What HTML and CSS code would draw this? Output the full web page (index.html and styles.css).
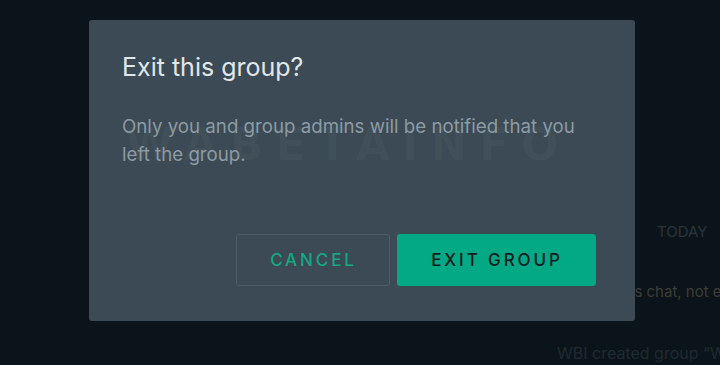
FILE: index.html
```html
<!DOCTYPE html>
<html lang="en">
<head>
<meta charset="utf-8">
<title>Exit this group?</title>
<link rel="stylesheet" href="styles.css">
</head>
<body>
  <main class="chat">
    <div class="day">TODAY</div>
    <div class="notice">this chat, not even WhatsApp, can read or listen to them.</div>
    <div class="system">WBI created group “WABetaInfo”</div>
  </main>
  <div class="dialog" role="dialog" aria-labelledby="dlg-title">
    <h1 class="dialog-title" id="dlg-title">Exit this group?</h1>
    <p class="dialog-text">Only you and group admins will be notified that you left the group.</p>
    <div class="dialog-actions">
      <button class="btn btn-outline" type="button">CANCEL</button>
      <button class="btn btn-primary" type="button">EXIT GROUP</button>
    </div>
    <div class="watermark" aria-hidden="true">WABETAINFO</div>
  </div>
</body>
</html>
```

FILE: styles.css
```css
html, body {
  margin: 0;
  padding: 0;
  height: 100%;
}

body {
  background: #0b141a;
  font-family: Inter, "Noto Sans", "Liberation Sans", sans-serif;
  overflow: hidden;
  position: relative;
}

.chat {
  display: flex;
  flex-direction: column;
  align-items: flex-start;
  padding-top: 222px;
  white-space: nowrap;
}

.day {
  margin-left: 657px;
  font-size: 15px;
  line-height: 20px;
  color: #29343b;
}

.notice {
  margin-left: 617px;
  margin-top: 40px;
  font-size: 15px;
  line-height: 20px;
  color: #3d3e35;
}

.system {
  margin-left: 557px;
  margin-top: 40px;
  font-size: 16px;
  line-height: 22px;
  color: #1e2a31;
}

.dialog {
  position: absolute;
  left: 89px;
  top: 20px;
  width: 546px;
  height: 301px;
  box-sizing: border-box;
  padding: 32px 39px 35px 33px;
  background: #3b4a54;
  border-radius: 3px;
  display: flex;
  flex-direction: column;
  overflow: hidden;
}

.dialog-title {
  margin: 0;
  font-size: 25px;
  line-height: 30px;
  font-weight: 400;
  color: #e1e6e9;
  position: relative;
  z-index: 1;
}

.dialog-text {
  margin: 31px 0 0;
  font-size: 18.7px;
  line-height: 27.5px;
  color: #8d9ba4;
  position: relative;
  z-index: 1;
}

.dialog-actions {
  margin-top: auto;
  display: flex;
  justify-content: flex-end;
  gap: 7px;
  position: relative;
  z-index: 1;
}

.btn {
  height: 52px;
  box-sizing: border-box;
  border-radius: 3px;
  font-family: inherit;
  font-size: 17px;
  font-weight: 500;
  letter-spacing: 2.9px;
  cursor: pointer;
  padding: 0 0 0 1px;
}

.btn-outline {
  width: 154px;
  background: transparent;
  border: 1px solid #4e5c66;
  color: #14a882;
}

.btn-primary {
  width: 199px;
  background: #03a884;
  border: 0;
  color: #111b21;
}

.watermark {
  position: absolute;
  left: 36px;
  top: 103px;
  font-family: "DejaVu Sans", sans-serif;
  font-weight: 700;
  font-size: 44px;
  line-height: 44px;
  letter-spacing: 12px;
  color: rgba(255, 255, 255, 0.035);
  white-space: nowrap;
  pointer-events: none;
}
```
